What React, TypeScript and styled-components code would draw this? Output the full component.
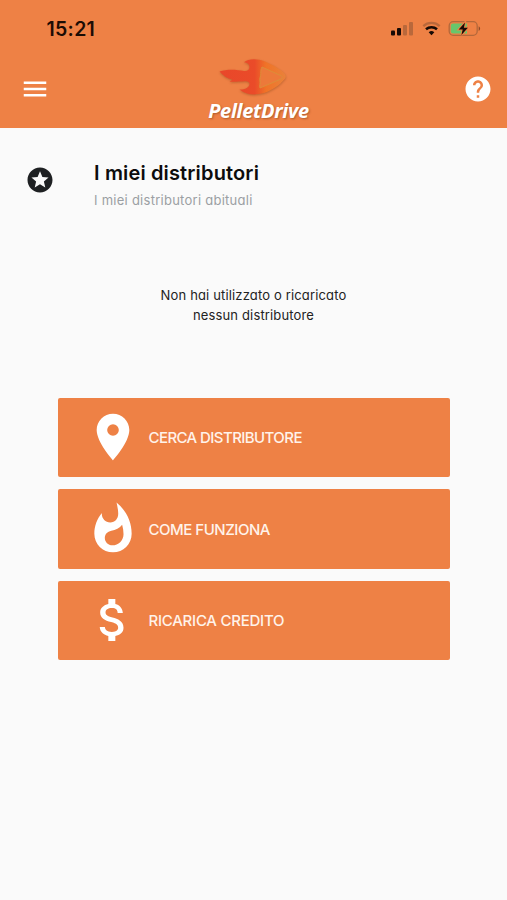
import React from 'react';
import styled, { createGlobalStyle } from 'styled-components';
import type { IconType } from 'react-icons';
import { MdAttachMoney, MdHelp, MdMenu, MdPlace, MdStars, MdWhatshot } from 'react-icons/md';

const ORANGE = '#ee8145';

const GlobalStyle = createGlobalStyle`
  * { box-sizing: border-box; }
  body { margin: 0; background: #fafafa; }
`;

const Screen = styled.div`
  min-height: 900px;
  background: #fafafa;
  font-family: Inter, 'Open Sans', sans-serif;
  font-feature-settings: 'cv11';
  color: #111;
`;

const Header = styled.header`
  height: 127.5px;
  background: ${ORANGE};
`;

const StatusBar = styled.div`
  display: flex;
  justify-content: space-between;
  align-items: center;
  height: 57px;
  padding: 0 26px 0 46.5px;
`;

const Clock = styled.span`
  font-size: 19.5px;
  font-weight: 600;
  letter-spacing: 0.3px;
  color: #1c0c04;
`;

const AppBar = styled.div`
  display: flex;
  justify-content: space-between;
  align-items: flex-start;
  height: 70px;
  padding: 0 14px 0 20px;
`;

const IconButton = styled.button`
  display: flex;
  margin: 17px 0 0;
  padding: 0;
  border: 0;
  background: none;
  color: #fff;
`;

const Brand = styled.div`
  display: flex;
  flex-direction: column;
  align-items: center;
  width: 120px;
  margin-left: 4px;
`;

const BrandMark = styled.svg`
  display: block;
  margin-right: 9px;
  filter: drop-shadow(0.5px 1px 1px rgba(120, 60, 20, 0.4));
`;

const BrandName = styled.span`
  font: italic 700 20px/25px 'Open Sans', sans-serif;
  letter-spacing: -0.3px;
  color: #fff;
  text-shadow: 1px 1px 2px rgba(90, 40, 10, 0.4);
`;

const Section = styled.section`
  display: flex;
  align-items: flex-start;
  height: 158.5px;
  padding: 32px 25px 0;
`;

const Badge = styled.span`
  display: flex;
  margin: 5.500px 39px 0 0;
  color: #1e2022;
`;

const Title = styled.h1`
  margin: 0;
  font-size: 20px;
  line-height: 27px;
  font-weight: 600;
  letter-spacing: 0.15px;
  white-space: nowrap;
  color: #0c0c0c;
`;

const Subtitle = styled.p`
  margin: 3.500px 0 0;
  font-size: 13px;
  line-height: 20px;
  letter-spacing: 0.26px;
  white-space: nowrap;
  color: #9b9fa3;
`;

const EmptyMessage = styled.p`
  height: 111.5px;
  margin: 0;
  font-size: 13px;
  line-height: 19.5px;
  letter-spacing: 0.15px;
  text-align: center;
  color: #222;
`;

const Actions = styled.nav`
  display: grid;
  gap: 12px;
  padding: 0 57.5px 0 58px;
`;

const ActionButton = styled.button`
  display: flex;
  align-items: center;
  gap: 7.5px;
  height: 79.5px;
  padding: 0 27px;
  border: 0;
  border-radius: 2px;
  background: ${ORANGE};
  color: #fff;
  font-family: inherit;
  font-feature-settings: inherit;
`;

const ActionLabel = styled.span<{ $tracking: number }>`
  padding-top: 1px;
  font-size: 15px;
  font-weight: 500;
  letter-spacing: ${(p) => p.$tracking}px;
  white-space: nowrap;
  color: #fff3ea;
`;

const actions: { label: string; icon: IconType; tracking: number }[] = [
  { label: 'CERCA DISTRIBUTORE', icon: MdPlace, tracking: -0.58 },
  { label: 'COME FUNZIONA', icon: MdWhatshot, tracking: -0.48 },
  { label: 'RICARICA CREDITO', icon: MdAttachMoney, tracking: -0.25 },
];

const StatusIcons = () => (
  <svg width="92" height="20" viewBox="0 0 92 20" fill="none">
    <g fill="#160a05">
      <rect x="2" y="11.5" width="4" height="5" rx="1" />
      <rect x="8" y="9" width="4" height="7.5" rx="1" />
    </g>
    <g fill="#b9683b">
      <rect x="14" y="6" width="4" height="10.5" rx="1" />
      <rect x="20" y="3" width="4" height="13.5" rx="1" />
    </g>
    <path d="M34.3 7.1a12.2 12.2 0 0 1 16.4 0" stroke="#b9683b" strokeWidth="2.3" />
    <path d="M37 10.3a8.2 8.2 0 0 1 11 0" stroke="#160a05" strokeWidth="2.5" />
    <path d="M39.7 13.2a4.4 4.4 0 0 1 5.6 0l-2.8 3z" fill="#160a05" />
    <rect x="60.2" y="2.7" width="28" height="13.6" rx="4" stroke="#b3683b" strokeWidth="1.3" />
    <path d="M64 4.5h14v10H64a2.2 2.2 0 0 1-2.2-2.2V6.7A2.2 2.2 0 0 1 64 4.5z" fill="#68c66b" />
    <path d="M89.7 7.3c1.9.8 1.9 3.8 0 4.6z" fill="#8f4a28" />
    <path d="M76 3.4l-6.3 7h4l-1.3 5.5 6.5-7.2h-4z" fill="#160a05" stroke={ORANGE} strokeWidth="2" paintOrder="stroke" />
  </svg>
);

const FlameLogo = () => (
  <BrandMark width="70" height="41" viewBox="0 0 70 41">
    <defs>
      <linearGradient id="flame" x1="0" x2="1">
        <stop offset="0" stopColor="#e9472a" />
        <stop offset="0.53" stopColor="#ea4b29" />
        <stop offset="0.7" stopColor="#f07327" />
        <stop offset="1" stopColor="#e9823b" />
      </linearGradient>
    </defs>
    <path
      fill="url(#flame)"
      d="M0.5 14.5C8 11.8 18 12.5 25 14c3 .5 5.5-1 5.5-4 0-2.800-2-4.500-5.500-4.700C29 1.500 38 1 46 4.500c7 2.800 15 7.500 19.500 12 1.800 1.800 1.800 4 0 5.800C61 28 53 33.500 45 36 36 38.500 27 38 20.500 32.500c5 .3 9-1.500 10-5 .3-2.300-1.500-3.500-4.500-3.300-5 .1-10 1-15.500.5l3-2C8 21.500 4 18.500.500 14.500z"
    />
    <path
      d="M43 10L62 18.700c1.500 1 1.500 2.300 0 3.300L41 31c-.8-2.500.5-4.500 0-7-.8-2.500 1-5 .8-7.500-.2-2.300.2-4.500 1.200-6.500z"
      fill="#ec793a"
      stroke="#d9903a"
      strokeWidth="0.9"
    />
  </BrandMark>
);

export default function App() {
  return (
    <Screen>
      <GlobalStyle />
      <Header>
        <StatusBar>
          <Clock>15:21</Clock>
          <StatusIcons />
        </StatusBar>
        <AppBar>
          <IconButton aria-label="Menu"><MdMenu size={30} /></IconButton>
          <Brand>
            <FlameLogo />
            <BrandName>PelletDrive</BrandName>
          </Brand>
          <IconButton aria-label="Aiuto"><MdHelp size={30} /></IconButton>
        </AppBar>
      </Header>
      <main>
        <Section>
          <Badge><MdStars size={30} /></Badge>
          <div>
            <Title>I miei distributori</Title>
            <Subtitle>I miei distributori abituali</Subtitle>
          </div>
        </Section>
        <EmptyMessage>
          Non hai utilizzato o ricaricato
          <br />
          nessun distributore
        </EmptyMessage>
        <Actions>
          {actions.map(({ label, icon: Icon, tracking }) => (
            <ActionButton key={label}>
              <Icon size={56} />
              <ActionLabel $tracking={tracking}>{label}</ActionLabel>
            </ActionButton>
          ))}
        </Actions>
      </main>
    </Screen>
  );
}
